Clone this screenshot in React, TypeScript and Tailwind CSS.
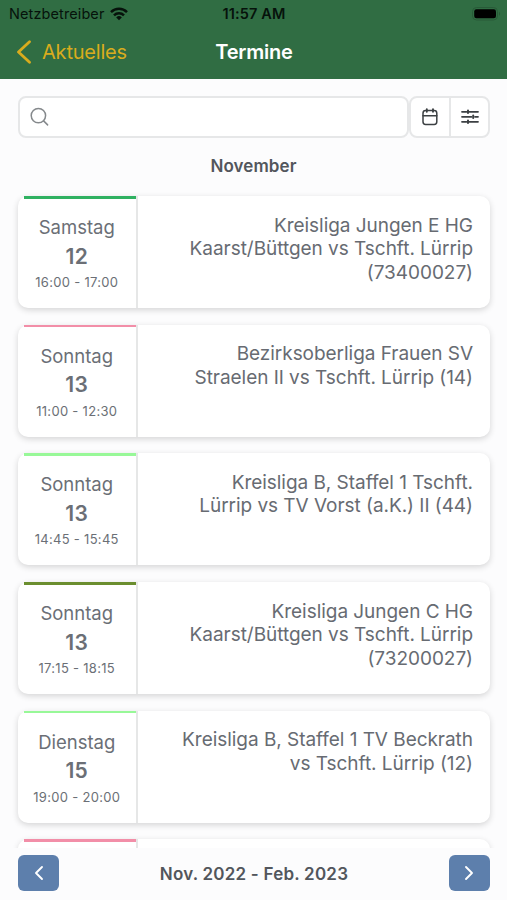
import { ChevronLeft, ChevronRight } from 'lucide-react';

interface Termin {
  day: string;
  date: string;
  time: string;
  lines: string[];
  accent: string;
}

const TERMINE: Termin[] = [
  {
    day: 'Samstag', date: '12', time: '16:00 - 17:00', accent: 'bg-[#2fb161]',
    lines: ['Kreisliga Jungen E HG', 'Kaarst/Büttgen vs Tschft. Lürrip', '(73400027)'],
  },
  {
    day: 'Sonntag', date: '13', time: '11:00 - 12:30', accent: 'bg-[#f28ea8]',
    lines: ['Bezirksoberliga Frauen SV', 'Straelen II vs Tschft. Lürrip (14)'],
  },
  {
    day: 'Sonntag', date: '13', time: '14:45 - 15:45', accent: 'bg-[#98f898]',
    lines: ['Kreisliga B, Staffel 1 Tschft.', 'Lürrip vs TV Vorst (a.K.) II (44)'],
  },
  {
    day: 'Sonntag', date: '13', time: '17:15 - 18:15', accent: 'bg-[#6b8e2f]',
    lines: ['Kreisliga Jungen C HG', 'Kaarst/Büttgen vs Tschft. Lürrip', '(73200027)'],
  },
  {
    day: 'Dienstag', date: '15', time: '19:00 - 20:00', accent: 'bg-[#98f898]',
    lines: ['Kreisliga B, Staffel 1 TV Beckrath', 'vs Tschft. Lürrip (12)'],
  },
  { day: '', date: '', time: '', accent: 'bg-[#f28ea8]', lines: [] },
];

function WifiIcon() {
  return (
    <svg width="18" height="14" viewBox="0 0 18 14" fill="none" stroke="#06120b" strokeWidth="2.5">
      <path d="M1 5.1a11.5 11.5 0 0 1 16 0" />
      <path d="M4 8.3a7.2 7.2 0 0 1 10 0" />
      <path d="M9 13.2 6.2 10.4a4 4 0 0 1 5.6 0z" fill="#06120b" stroke="none" />
    </svg>
  );
}

function BatteryIcon() {
  return (
    <svg width="29" height="14" viewBox="0 0 29 14">
      <rect x="0.5" y="0.5" width="25" height="12.5" rx="4" fill="none" stroke="#285b38" />
      <rect x="2.2" y="2.3" width="21.8" height="9" rx="2.2" fill="#000" />
      <path d="M27 4.8c1.4.8 1.4 3.2 0 4z" fill="#285b38" />
    </svg>
  );
}

function SearchIcon() {
  return (
    <svg width="20" height="20" viewBox="0 0 20 20" fill="none" stroke="#85898c" strokeWidth="1.5" strokeLinecap="round">
      <circle cx="8.4" cy="8.6" r="7.2" />
      <path d="m13.6 13.9 4 4" />
    </svg>
  );
}

function CalendarIcon() {
  return (
    <svg width="18" height="18" viewBox="0 0 18 18" fill="none" stroke="#3c4043" strokeWidth="1.5" strokeLinecap="round">
      <rect x="2" y="2.6" width="13.8" height="13.8" rx="2.6" />
      <path d="M2 7.8h13.8" />
      <path d="M5.8 1.2v2.6M12 1.2v2.6" strokeWidth="1.9" />
    </svg>
  );
}

function SlidersIcon() {
  return (
    <svg width="18" height="16" viewBox="0 0 18 16" fill="none" stroke="#3c4043" strokeWidth="1.8" strokeLinecap="round">
      <path d="M1 2.8h4.5M8.2 2.8H17M1 7.8h9.5M14 7.8h3M1 12.8h4.5M8.2 12.8H17" />
      <path d="M7 1.6V4M12.2 6.6V9M7 11.6V14" strokeWidth="2" />
    </svg>
  );
}

function TerminCard({ day, date, time, lines, accent }: Termin) {
  return (
    <div className="relative flex h-[112px] shrink-0 rounded-[10px] bg-white shadow-[0_2px_6px_rgba(0,0,0,0.16)]">
      <div className={`absolute left-[6px] top-0 h-[2.5px] w-[112px] ${accent}`} />
      <div className="flex w-[119.5px] flex-col items-center border-r-[2.5px] border-[#e6e7e7] pt-[18px] text-[#6b6f76]">
        <div className="h-[27.5px] text-[18.5px] leading-[27px]">{day}</div>
        <div className="h-[29.5px] text-[21px] font-semibold leading-[30px] tracking-[0.3px]">{date}</div>
        <div className="h-[22px] text-[13px] leading-[22px] tracking-[0.3px]">{time}</div>
      </div>
      <div className="flex-1 pr-[17px] pt-[17.7px] text-right text-[19px] leading-[23.4px] tracking-[-0.04px] text-[#676b72]">
        {lines.map(line => (
          <div key={line} className="whitespace-nowrap">{line}</div>
        ))}
      </div>
    </div>
  );
}

export default function App() {
  return (
    <div className="flex h-[900px] w-[507px] flex-col overflow-hidden bg-[#fcfcfd] font-['Inter','Liberation_Sans',sans-serif]">
      <header className="h-[79px] shrink-0 bg-[#306d43]">
        {/* Status bar */}
        <div className="grid h-[27px] grid-cols-3 items-center pl-[9px] pr-[8px] text-[14.5px] text-[#06120b]">
          <div className="flex items-center gap-[6px]">
            <span className="tracking-[0.1px]">Netzbetreiber</span>
            <WifiIcon />
          </div>
          <span className="text-center font-semibold tracking-[0.15px]">11:57 AM</span>
          <div className="-mr-[2px] flex justify-end"><BatteryIcon /></div>
        </div>

        {/* Navigation bar */}
        <div className="grid h-[50px] grid-cols-3 items-center pl-[16px] pr-[15px]">
          <button className="flex items-center gap-[10px] text-[20px] tracking-[-0.2px] text-[#d9ac1d]">
            <svg width="16" height="24" viewBox="0 0 16 24" fill="none" stroke="currentColor" strokeWidth="2.8" strokeLinecap="round" strokeLinejoin="round">
              <path d="M13.5 1.8 2.5 12l11 10.2" />
            </svg>
            <span>Aktuelles</span>
          </button>
          <h1 className="text-center text-[20px] font-semibold tracking-[-0.2px] text-white">Termine</h1>
        </div>
      </header>

      {/* Search and filter */}
      <div className="mt-[17px] flex h-[42px] shrink-0 pl-[18px] pr-[17px]">
        <div className="flex w-[391px] items-center rounded-[8px] border-2 border-[#e6e7e8] bg-white pl-[10px]">
          <SearchIcon />
        </div>
        <div className="flex flex-1 rounded-[8px] border-2 border-[#e6e7e8] bg-white">
          <button className="flex w-[40px] items-center justify-center border-r-2 border-[#e6e7e8]"><CalendarIcon /></button>
          <button className="flex flex-1 items-center justify-center"><SlidersIcon /></button>
        </div>
      </div>

      <h2 className="mt-[16px] h-[24px] shrink-0 text-center text-[17px] font-semibold leading-[24px] tracking-[0.1px] text-[#52565c]">November</h2>

      <main className="mt-[8px] flex h-[662px] shrink-0 flex-col gap-[16.7px] overflow-hidden pl-[18px] pr-[17px] pt-[10px]">
        {TERMINE.map((termin, i) => (
          <TerminCard key={i} {...termin} />
        ))}
      </main>

      <footer className="flex flex-1 items-start justify-between bg-[#fcfcfd] pl-[18px] pr-[17px] pt-[7px]">
        <button className="flex h-[36px] w-[41px] items-center justify-center rounded-[6px] bg-[#5d7fac] text-white"><ChevronLeft size={24} strokeWidth={1.9} /></button>
        <span className="text-[17px] font-semibold leading-[38px] tracking-[0.22px] text-[#52565c]">Nov. 2022 - Feb. 2023</span>
        <button className="flex h-[36px] w-[41px] items-center justify-center rounded-[6px] bg-[#5d7fac] text-white"><ChevronRight size={24} strokeWidth={1.9} /></button>
      </footer>
    </div>
  );
}
